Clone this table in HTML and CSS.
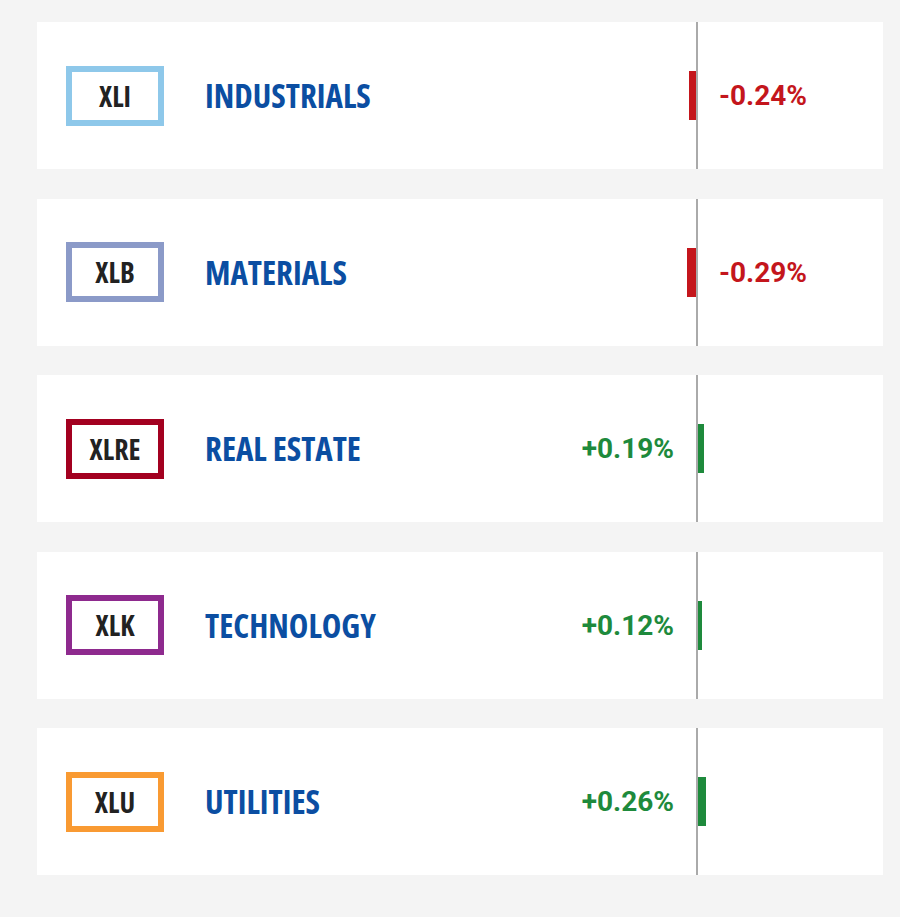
FILE: index.html
```html
<!DOCTYPE html>
<html>
<head>
<meta charset="utf-8">
<link rel="stylesheet" href="styles.css">
</head>
<body>
<div class="list">
  <div class="card">
    <div class="left">
      <div class="badge b-xli">XLI</div>
      <div class="name">INDUSTRIALS</div>
      <div class="bar neg" style="width:7px"></div>
    </div>
    <div class="axis"></div>
    <div class="right">
      <div class="val neg-val">-0.24%</div>
    </div>
  </div>
  <div class="card">
    <div class="left">
      <div class="badge b-xlb">XLB</div>
      <div class="name">MATERIALS</div>
      <div class="bar neg" style="width:9px"></div>
    </div>
    <div class="axis"></div>
    <div class="right">
      <div class="val neg-val">-0.29%</div>
    </div>
  </div>
  <div class="card">
    <div class="left">
      <div class="badge b-xlre">XLRE</div>
      <div class="name">REAL ESTATE</div>
      <div class="val pos-val">+0.19%</div>
    </div>
    <div class="axis"></div>
    <div class="right">
      <div class="bar pos" style="width:6px"></div>
    </div>
  </div>
  <div class="card">
    <div class="left">
      <div class="badge b-xlk">XLK</div>
      <div class="name">TECHNOLOGY</div>
      <div class="val pos-val">+0.12%</div>
    </div>
    <div class="axis"></div>
    <div class="right">
      <div class="bar pos" style="width:4px"></div>
    </div>
  </div>
  <div class="card">
    <div class="left">
      <div class="badge b-xlu">XLU</div>
      <div class="name">UTILITIES</div>
      <div class="val pos-val">+0.26%</div>
    </div>
    <div class="axis"></div>
    <div class="right">
      <div class="bar pos" style="width:8px"></div>
    </div>
  </div>
</div>
</body>
</html>
```
FILE: styles.css
```css
html, body {
  margin: 0;
  padding: 0;
  background: #f4f4f4;
}
body {
  padding: 22px 17px 0 37px;
}
.list {
  display: flex;
  flex-direction: column;
  gap: 29.5px;
  width: 846px;
}
.card {
  background: #ffffff;
  height: 147px;
  display: grid;
  grid-template-columns: 659px 2px 185px;
}
.left {
  display: flex;
  align-items: center;
  padding-left: 29px;
}
.right {
  display: flex;
  align-items: center;
}
.axis {
  background: #aaaaaa;
}
.badge {
  box-sizing: border-box;
  width: 98px;
  height: 60px;
  border: 6.5px solid #8ec8ea;
  display: flex;
  align-items: center;
  justify-content: center;
  font-family: "Open Sans", sans-serif;
  font-stretch: 75%;
  font-weight: bold;
  font-size: 28px;
  color: #222222;
  background: #fff;
}
.b-xli { border-color: #8ec8ea; }
.b-xlb { border-color: #8b9ac8; }
.b-xlre { border-color: #a30020; }
.b-xlk { border-color: #8e2a8e; }
.b-xlu { border-color: #f99a32; }
.name {
  margin-left: 41px;
  font-family: "Open Sans", sans-serif;
  font-stretch: 75%;
  font-weight: bold;
  font-size: 33px;
  color: #0b4ea2;
}
.bar {
  height: 49px;
}
.left .bar {
  margin-left: auto;
}
.bar.neg { background: #c4161c; }
.bar.pos { background: #1e8a3c; }
.val {
  font-family: Roboto, sans-serif;
  font-weight: bold;
  font-size: 28px;
}
.pos-val {
  margin-left: auto;
  margin-right: 22px;
  color: #1e8a3c;
}
.neg-val {
  margin-left: 21px;
  color: #c4161c;
}
```
